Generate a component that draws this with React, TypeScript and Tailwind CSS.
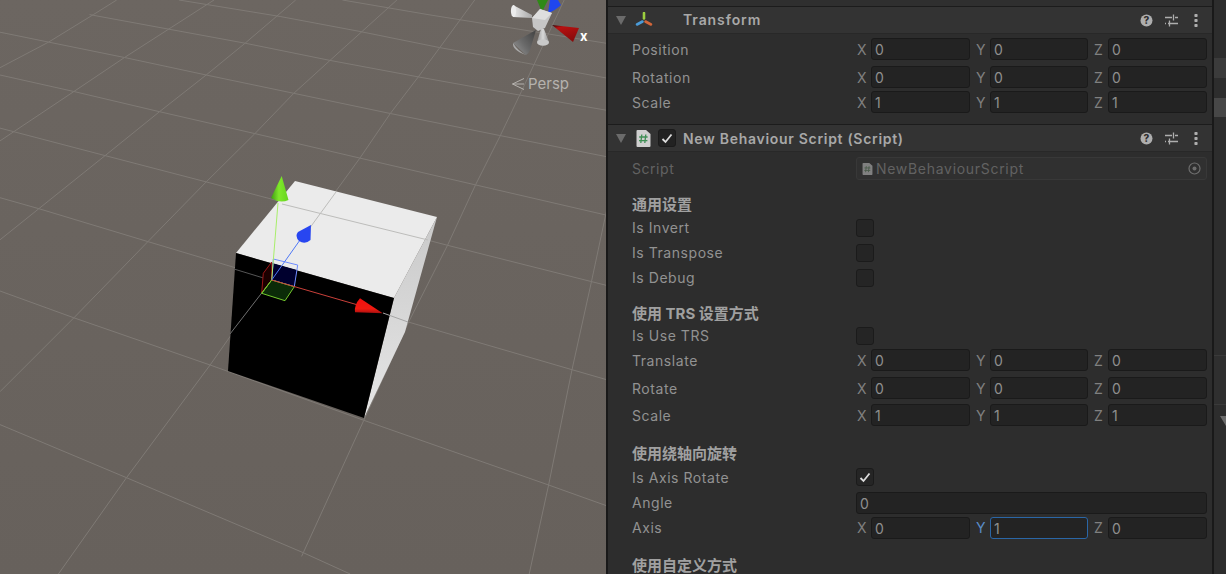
import React from "react";

const FONT = "font-['Inter','Noto_Sans_CJK_SC',sans-serif]";

const gridLines: [number, number][][] = [
  [[460, 0], [720, 45], [920, 85], [1130, 130], [1340, 170], [1568, 215]],
  [[880, 0], [1100, 40], [1568, 120]],
  [[230, 40], [630, 118], [848, 165], [1075, 210], [1310, 255], [1568, 303]],
  [[0, 88], [125, 115], [320, 157], [530, 205], [755, 255], [1003, 310], [1283, 370], [1568, 430]],
  [[0, 205], [190, 250], [410, 305], [655, 365], [925, 432], [1222, 505], [1568, 590]],
  [[0, 350], [270, 425], [530, 497], [820, 578], [1150, 670], [1568, 782]],
  [[0, 540], [100, 570], [380, 660], [600, 730], [1050, 880], [1470, 1010], [1568, 1040]],
  [[0, 795], [190, 868], [540, 997], [935, 1148], [1410, 1325], [1568, 1385]],
  [[0, 1160], [325, 1305], [780, 1510], [900, 1568]],
  [[0, 185], [125, 115], [240, 40], [300, 0]],
  [[0, 385], [190, 250], [320, 157], [440, 75], [550, 0]],
  [[0, 655], [270, 425], [410, 305], [530, 205], [630, 118], [760, 0]],
  [[0, 1070], [190, 868], [380, 660], [530, 497], [655, 365], [755, 255], [848, 165], [1020, 0]],
  [[150, 1568], [325, 1305], [540, 997], [670, 800], [825, 578], [925, 432], [1003, 310], [1075, 210], [1220, 0]],
  [[775, 1520], [935, 1148], [1050, 880], [1150, 670], [1222, 505], [1285, 372], [1340, 250], [1450, 0]],
  [[1360, 1568], [1410, 1325], [1470, 1010], [1520, 770], [1568, 530]],
];

function Scene() {
  return (
    <div className="relative w-[606px] h-[574px] shrink-0 overflow-hidden bg-linear-to-b from-[#6c6661] to-[#67615c]">
      <svg className="absolute inset-0 w-full h-full" viewBox="0 0 606 574">
        <defs>
          <linearGradient id="gGreen" x1="0" y1="0" x2="1" y2="0">
            <stop offset="0" stopColor="#3f9a14" />
            <stop offset="0.45" stopColor="#7fe82a" />
            <stop offset="1" stopColor="#66d41e" />
          </linearGradient>
          <linearGradient id="gRed" x1="0" y1="0" x2="0" y2="1">
            <stop offset="0" stopColor="#f01010" />
            <stop offset="0.7" stopColor="#f01a10" />
            <stop offset="1" stopColor="#a51010" />
          </linearGradient>
          <linearGradient id="gRight" x1="0" y1="0" x2="0" y2="1">
            <stop offset="0" stopColor="#c9c9c9" />
            <stop offset="1" stopColor="#e6e6e6" />
          </linearGradient>
          <linearGradient id="gGrey" x1="0" y1="1" x2="1" y2="0.2">
            <stop offset="0" stopColor="#9a9a9a" />
            <stop offset="0.5" stopColor="#6a6a6a" />
            <stop offset="1" stopColor="#484848" />
          </linearGradient>
          <linearGradient id="gWhite" x1="0" y1="0" x2="1" y2="0">
            <stop offset="0" stopColor="#e8e8e8" />
            <stop offset="1" stopColor="#a9a9a9" />
          </linearGradient>
          <linearGradient id="gSmall" x1="0" y1="0" x2="1" y2="0">
            <stop offset="0" stopColor="#9a9a9a" />
            <stop offset="0.5" stopColor="#d8d8d8" />
            <stop offset="1" stopColor="#8f8f8f" />
          </linearGradient>
          <linearGradient id="gRedSmall" x1="0" y1="0" x2="0.4" y2="1">
            <stop offset="0" stopColor="#2e0505" />
            <stop offset="0.22" stopColor="#b81010" />
            <stop offset="1" stopColor="#8a0c0c" />
          </linearGradient>
        </defs>

        {gridLines.map((l, i) => (
          <polyline
            key={i}
            points={l.map(([x, y]) => `${(x / 2.57).toFixed(1)},${(y / 2.7317).toFixed(1)}`).join(" ")}
            fill="none"
            stroke="#7f7a75"
            strokeWidth="1"
          />
        ))}

        {/* cube */}
        <polygon points="295,181 437,217 394,298 236,253" fill="#ebebeb" />
        <polygon points="437,217 394,298 364,418 405,332" fill="url(#gRight)" />
        <polygon points="236,253 394,298 364,418 228,371" fill="#000" />

        {/* grid seen through the cube */}
        <polyline points="282,204 428,240" fill="none" stroke="#bdbdbb" strokeWidth="1" />
        <polyline points="336,192 301,240" fill="none" stroke="#bdbdbb" strokeWidth="1" />
        <polyline points="271,281 230,334" fill="none" stroke="#6f6f6f" strokeWidth="1" />
        <polyline points="234,269 270,280" fill="none" stroke="#555555" strokeWidth="1" />
        <polyline points="383,313 408,322" fill="none" stroke="#a5a5a5" strokeWidth="1" />

        {/* handle planes */}
        <polygon points="272,263 297,270 294.3,286.7 271.7,280" fill="#00002e" />
        <polygon points="273.3,259 297.7,265 294.3,286.7 271.7,280" fill="none" stroke="#6f8cff" strokeWidth="1" />
        <polygon points="271.7,262 263.3,273.3 261.7,292.7 271.7,280" fill="#1c0000" stroke="#9c1616" strokeWidth="1" />
        <polygon points="271.7,280 294.3,286.7 285,300.7 261.7,293.3" fill="#0b2b08" stroke="#74c92e" strokeWidth="1" />

        {/* axes */}
        <line x1="271.7" y1="280" x2="278" y2="203" stroke="#a8ee6a" strokeWidth="1" />
        <line x1="261.7" y1="293.3" x2="271.7" y2="280" stroke="#74c92e" strokeWidth="1" />
        <line x1="271.7" y1="280" x2="300" y2="240" stroke="#4f78f5" strokeWidth="1" />
        <line x1="271.7" y1="280" x2="358" y2="305" stroke="#c9403a" strokeWidth="1" />

        {/* arrows */}
        <path d="M281.7 176 L288.5 200 Q280 204 271 198 Z" fill="url(#gGreen)" />
        <path d="M311 225 L310.5 240 Q305 245 299 241 Q294.5 236 298 232 Z" fill="#2846f0" />
        <path d="M360 298.3 L382.7 313.3 L355 312.3 Q354 305 360 298.3 Z" fill="url(#gRed)" />

        {/* orientation gizmo */}
        <path d="M537 0 L548 0 L542 12 Z" fill="#2f8a16" />
        <path d="M550 0 L558 0 L561 5 Q556 10 548 13 Z" fill="#1f46ee" />
        <path d="M513 5 L532 15 L532 18 L513 17 Z" fill="url(#gWhite)" />
        <ellipse cx="513.5" cy="11" rx="2.6" ry="6" fill="#ececec" />
        <path d="M532 18 L540 9 L552 13 L545 28 L538 31 L533 27 Z" fill="#c6c6c6" />
        <path d="M540 9 L552 13 L545 20 L532 18 Z" fill="#dedede" />
        <path d="M536 30 L513 43 L526 55 Q529 53 530 50 Z" fill="url(#gGrey)" />
        <path d="M513 43 Q512 50 526 55 Q518 51 513 43 Z" fill="#a8a8a8" />
        <path d="M541 29 L537 42 L549 42 L544 29 Z" fill="url(#gSmall)" />
        <ellipse cx="543" cy="42.5" rx="6" ry="3.2" fill="#c9c9c9" />
        <path d="M552 25 L579 28 L573 42 Z" fill="url(#gRedSmall)" />
      </svg>

      <div className={`absolute left-[580px] top-[27px] text-[13px] font-bold leading-[18px] text-white ${FONT}`}>x</div>

      <svg className="absolute left-[511px] top-[77px] w-[14px] h-[14px]" viewBox="0 0 14 14">
        <path d="M13 1.5 L1.5 7 L13 12.5 M1.5 7 L13 7" fill="none" stroke="#b5b2ae" strokeWidth="1" />
      </svg>
      <div className={`absolute left-[528px] top-[74px] text-[15px] leading-[20px] text-[#b5b2ae] ${FONT}`}>Persp</div>
    </div>
  );
}

function Caret() {
  return (
    <svg className="ml-[8px] mr-0 shrink-0" width="10" height="9" viewBox="0 0 10 9">
      <path d="M0 0 H10 L5 9 Z" fill="#6b6b6b" />
    </svg>
  );
}

function HeaderIcons() {
  return (
    <div className="ml-auto flex items-center">
      <svg width="13" height="13" viewBox="0 0 13 13" className="mr-[12px]">
        <circle cx="6.5" cy="6.5" r="6" fill="#aeaeae" />
        <text x="6.5" y="10.2" textAnchor="middle" fontSize="10" fontWeight="800" fontFamily="Inter" fill="#2f2f2f">?</text>
      </svg>
      <svg width="13" height="13" viewBox="0 0 13 13" className="mr-[16px]">
        <path d="M0 3.5 H7 M10 3.5 H13 M8.5 0.5 V6.5 M0 9.5 H1 M3 9.5 H13 M4.5 6.5 V12.5" stroke="#aeaeae" strokeWidth="1.3" fill="none" />
      </svg>
      <svg width="4" height="13" viewBox="0 0 4 13" className="mr-[14px]">
        <rect x="0.4" y="0" width="3.2" height="3" rx="0.8" fill="#aeaeae" />
        <rect x="0.4" y="5" width="3.2" height="3" rx="0.8" fill="#aeaeae" />
        <rect x="0.4" y="10" width="3.2" height="3" rx="0.8" fill="#aeaeae" />
      </svg>
    </div>
  );
}

function ScriptGlyph({ w, h, dim }: { w: number; h: number; dim?: boolean }) {
  return (
    <svg width={w} height={h} viewBox="0 0 15 17" className="shrink-0">
      <path d="M0.5 1 Q0.5 0 1.5 0 H10 L14.5 4 V16 Q14.5 17 13.5 17 H1.5 Q0.5 17 0.5 16 Z" fill={dim ? "#808080" : "#cfcfcf"} />
      <path d="M5.8 4.5 L4.8 13 M9.8 4.5 L8.8 13 M3.2 7 H11.6 M3 10.6 H11.4" stroke={dim ? "#4c5c4c" : "#3f8f55"} strokeWidth="1.3" fill="none" />
    </svg>
  );
}

function Check() {
  return (
    <svg width="12" height="11" viewBox="0 0 12 11">
      <path d="M1.5 6 L4.5 9 L10.5 1.5" fill="none" stroke="#dcdcdc" strokeWidth="1.8" />
    </svg>
  );
}

function Checkbox({ checked }: { checked?: boolean }) {
  return (
    <div className="w-[18px] h-[18px] rounded-[3px] bg-[#252525] border border-[#1b1b1b] flex items-center justify-center">
      {checked && <Check />}
    </div>
  );
}

function Field({ v, focus, w }: { v: string; focus?: boolean; w: string }) {
  return (
    <div
      className={`h-[22px] ${w} rounded-[3px] bg-[#232323] border pl-[3px] text-[14px] leading-[22px] text-[#8f8f8f] ${
        focus ? "border-[#2a66a6]" : "border-[#1a1a1a]"
      }`}
    >
      {v}
    </div>
  );
}

function Vec({ vals, focusY, low }: { vals: string[]; focusY?: boolean; low?: boolean }) {
  const shift = low ? "translate-y-[1px]" : "";
  return (
    <div className="flex items-center">
      <div className={`w-[15px] pl-[1px] text-[14px] text-[#808080] leading-[22px] ${shift}`}>X</div>
      <Field v={vals[0]} w="w-[99px]" />
      <div className={`w-[20px] pl-[6px] text-[14px] leading-[22px] text-[#808080] ${shift}`}>
        <span className={focusY ? "text-[#5a8cc8]" : ""}>Y</span>
      </div>
      <Field v={vals[1]} focus={focusY} w="w-[98px]" />
      <div className={`w-[20px] pl-[6px] text-[14px] leading-[22px] text-[#808080] ${shift}`}>Z</div>
      <Field v={vals[2]} w="w-[99px]" />
    </div>
  );
}

function Row({ label, cls, children, dim, low }: { label: string; cls: string; children: React.ReactNode; dim?: boolean; low?: boolean }) {
  return (
    <div className={`flex items-center pl-[24px] ${cls}`}>
      <div
        className={`w-[224px] shrink-0 text-[14px] tracking-[0.55px] leading-[20px] ${low ? "translate-y-[1px]" : ""} ${
          dim ? "text-[#626262]" : "text-[#929292]"
        }`}
      >
        {label}
      </div>
      {children}
    </div>
  );
}

function Heading({ text, cls }: { text: string; cls: string }) {
  return <div className={`pl-[24px] h-[20px] text-[15px] leading-[20px] font-bold text-[#a0a0a0] ${cls}`}>{text}</div>;
}

function Inspector() {
  return (
    <div className={`w-[604px] h-[574px] shrink-0 overflow-hidden bg-[#2d2d2d] ${FONT}`}>
      <div className="h-[7px] border-b border-[#1c1c1c] bg-[#2f2f2f]" />
      <div className="h-[27px] flex items-center bg-[#333333] border-b border-[#282828]">
        <Caret />
        <svg width="18" height="16" viewBox="0 0 18 16" className="ml-[9px] shrink-0">
          <path d="M9 1 V6.5" stroke="#9ccf3f" strokeWidth="2.6" strokeLinecap="round" />
          <path d="M7.5 9.5 L2 12.5" stroke="#4a9bd8" strokeWidth="2.6" strokeLinecap="round" />
          <path d="M10.5 9.5 L16 12.5" stroke="#d2663a" strokeWidth="2.6" strokeLinecap="round" />
        </svg>
        <div className="ml-[30px] -mt-[1px] text-[14px] font-semibold tracking-[0.9px] text-[#a8a8a8]">Transform</div>
        <HeaderIcons />
      </div>

      <Row label="Position" low cls="mt-[4px]"><Vec low vals={["0", "0", "0"]} /></Row>
      <Row label="Rotation" low cls="mt-[6px]"><Vec low vals={["0", "0", "0"]} /></Row>
      <Row label="Scale" low cls="mt-[3px]"><Vec low vals={["1", "1", "1"]} /></Row>

      <div className="mt-[11px] h-[28px] flex items-center bg-[#333333] border-t border-b border-t-[#1c1c1c] border-b-[#282828]">
        <Caret />
        <div className="ml-[10px]"><ScriptGlyph w={15} h={17} /></div>
        <div className="ml-[7px] w-[18px] h-[18px] rounded-[3px] bg-[#222222] border border-[#1b1b1b] flex items-center justify-center">
          <Check />
        </div>
        <div className="ml-[7px] text-[14px] font-semibold tracking-[0.7px] text-[#a8a8a8]">New Behaviour Script (Script)</div>
        <HeaderIcons />
      </div>

      <Row label="Script" dim cls="mt-[5px]">
        <div className="w-[351px] h-[23px] rounded-[3px] bg-[#303030] border border-[#383838] flex items-center pl-[5px] text-[14px] tracking-[0.7px] text-[#626262]">
          <ScriptGlyph w={11} h={12} dim />
          <span className="ml-[3px]">NewBehaviourScript</span>
          <svg width="13" height="13" viewBox="0 0 13 13" className="ml-auto mr-[5px]">
            <circle cx="6.5" cy="6.5" r="5.5" fill="none" stroke="#6e6e6e" strokeWidth="1.2" />
            <circle cx="6.5" cy="6.5" r="2" fill="#6e6e6e" />
          </svg>
        </div>
      </Row>

      <Heading text="通用设置" cls="mt-[15px]" />
      <Row label="Is Invert" cls="mt-[3px]"><Checkbox /></Row>
      <Row label="Is Transpose" cls="mt-[5px]"><Checkbox /></Row>
      <Row label="Is Debug" cls="mt-[5px]"><Checkbox /></Row>

      <Heading text="使用 TRS 设置方式" cls="mt-[16px]" />
      <Row label="Is Use TRS" cls="mt-[2px]"><Checkbox /></Row>
      <Row label="Translate" low cls="mt-[3px]"><Vec low vals={["0", "0", "0"]} /></Row>
      <Row label="Rotate" low cls="mt-[6px]"><Vec low vals={["0", "0", "0"]} /></Row>
      <Row label="Scale" low cls="mt-[5px]"><Vec low vals={["1", "1", "1"]} /></Row>

      <Heading text="使用绕轴向旋转" cls="mt-[18px]" />
      <Row label="Is Axis Rotate" low cls="mt-[3px]"><Checkbox checked /></Row>
      <Row label="Angle" cls="mt-[5px]"><Field v="0" w="w-[351px]" /></Row>
      <Row label="Axis" cls="mt-[3px]"><Vec vals={["0", "1", "0"]} focusY /></Row>

      <Heading text="使用自定义方式" cls="mt-[17px]" />
    </div>
  );
}

function RightStrip() {
  return (
    <div className="flex-1 h-[574px] bg-[#2d2d2d] flex flex-col">
      <div className="h-[58px]" />
      <div className="h-[20px] bg-[#3b3b3b]" />
      <div className="h-[20px]" />
      <div className="h-[19px] bg-[#474747]" />
      <div className="h-[238px]" />
      <div className="h-[50px] border-t border-b border-[#3a3a3a] bg-[#2f2f2f] relative">
        <div className="absolute right-0 top-[8px] w-[2px] h-[12px] bg-[#b8b8b8]" />
        <div className="absolute right-0 top-[36px] w-[4px] h-[1px] bg-[#b8b8b8]" />
      </div>
      <svg width="12" height="10" viewBox="0 0 12 10" className="mt-[11px] ml-[6px]">
        <path d="M0 0 H12 L6 10 Z" fill="#6b6b6b" />
      </svg>
    </div>
  );
}

export default function App() {
  return (
    <div className="flex w-[1226px] h-[574px] overflow-hidden bg-[#2d2d2d]">
      <Scene />
      <div className="w-[2px] h-[574px] bg-[#191919] shrink-0" />
      <Inspector />
      <div className="w-[2px] h-[574px] bg-[#191919] shrink-0" />
      <RightStrip />
    </div>
  );
}
